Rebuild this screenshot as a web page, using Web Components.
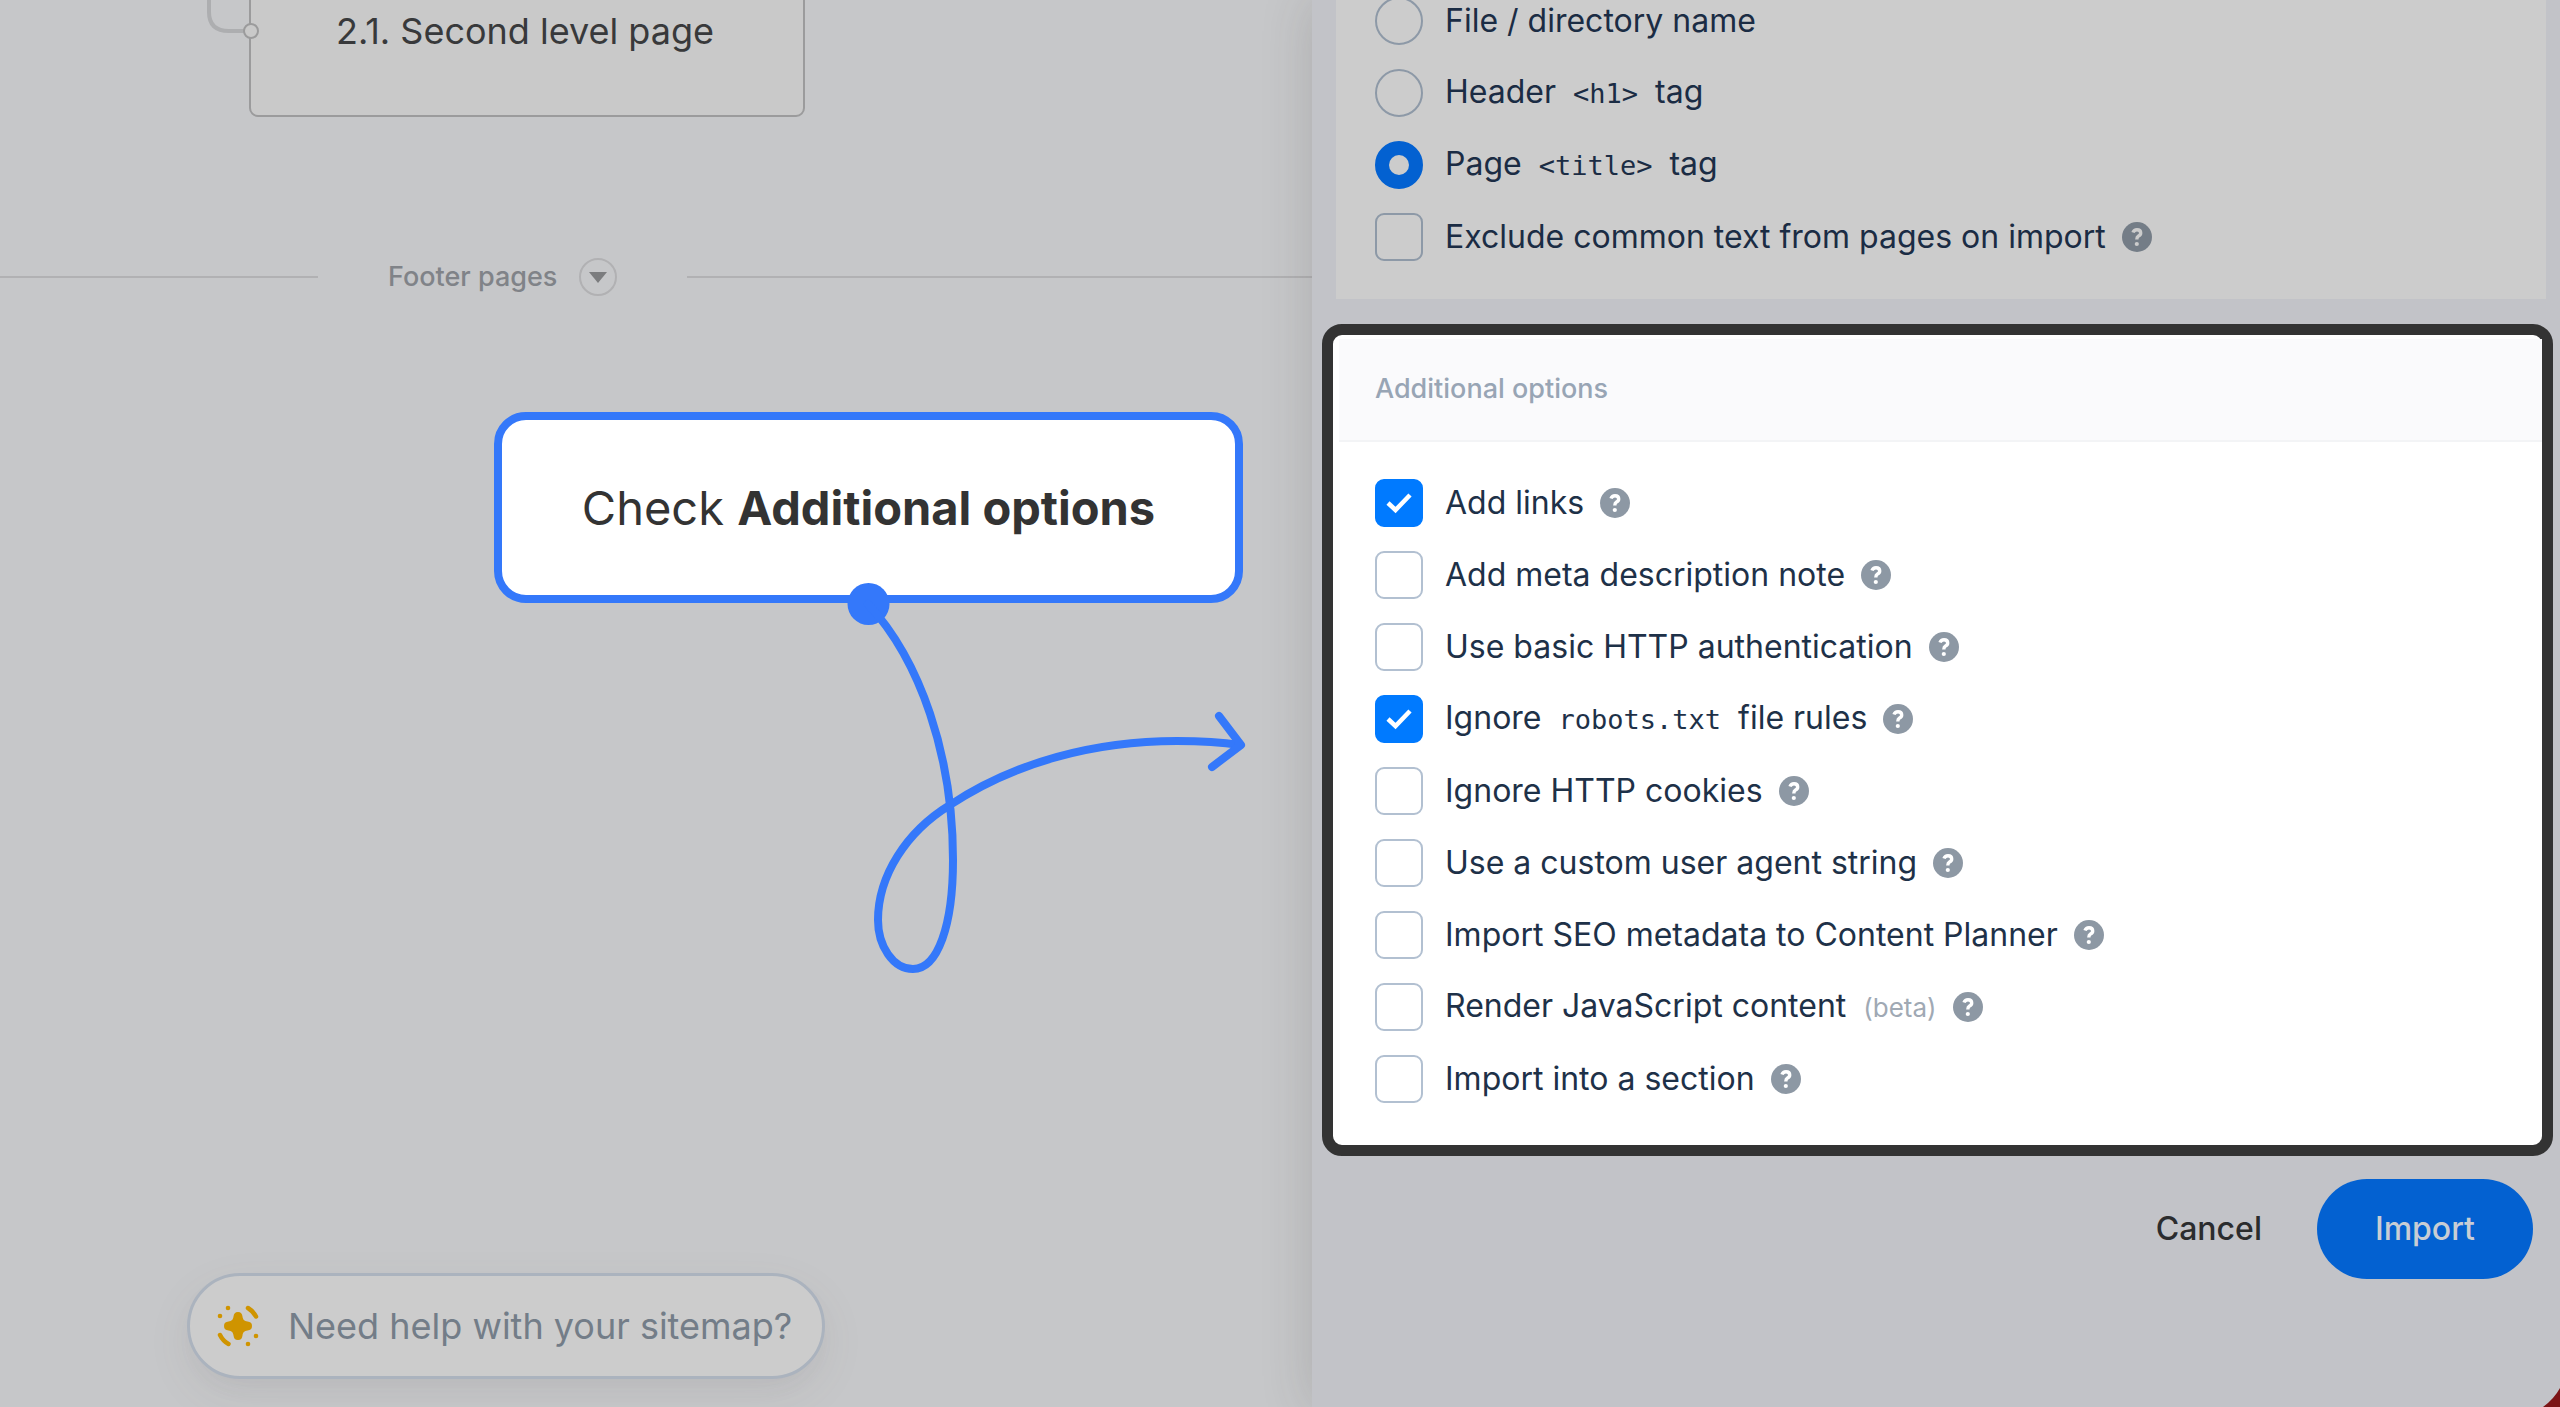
<!DOCTYPE html>
<html lang="en">
<head>
  <meta charset="utf-8">
  <title>Import sitemap</title>
  <style>
    body {
      margin: 0;
      background: #c6c7c9;
      font-family: Inter, "Liberation Sans", sans-serif;
    }
  </style>
</head>
<body>
  <app-shell>
    <site-canvas slot="canvas">
      <page-node>2.1. Second level page</page-node>
      <section-divider>Footer pages</section-divider>
      <help-pill>Need help with your sitemap?</help-pill>
      <tour-callout>Check <b>Additional options</b></tour-callout>
    </site-canvas>

    <import-panel slot="panel">
      <option-group>
        <option-row type="radio">File / directory name</option-row>
        <option-row type="radio">Header <code>&lt;h1&gt;</code> tag</option-row>
        <option-row type="radio" checked>Page <code>&lt;title&gt;</code> tag</option-row>
        <option-row help>Exclude common text from pages on import</option-row>
      </option-group>

      <option-group highlighted heading="Additional options">
        <option-row checked help>Add links</option-row>
        <option-row help>Add meta description note</option-row>
        <option-row help>Use basic HTTP authentication</option-row>
        <option-row checked help>Ignore <code>robots.txt</code> file rules</option-row>
        <option-row help>Ignore HTTP cookies</option-row>
        <option-row help>Use a custom user agent string</option-row>
        <option-row help>Import SEO metadata to Content Planner</option-row>
        <option-row help>Render JavaScript content <small>(beta)</small></option-row>
        <option-row help>Import into a section</option-row>
      </option-group>
    </import-panel>
  </app-shell>

  <script>
    class AppShell extends HTMLElement {
      constructor() {
        super();
        this.attachShadow({ mode: 'open' });
      }

      connectedCallback() {
        this.shadowRoot.innerHTML = `
          <style>
            :host {
              display: grid;
              grid-template-columns: 41fr 39fr;
              min-height: 100vh;
              overflow: hidden;
            }
          </style>
          <slot name="canvas"></slot>
          <slot name="panel"></slot>
        `;
      }
    }

    class SiteCanvas extends HTMLElement {
      constructor() {
        super();
        this.attachShadow({ mode: 'open' });
      }

      connectedCallback() {
        this.shadowRoot.innerHTML = `
          <style>
            :host {
              display: block;
              position: relative;
              padding-top: 257px;
            }
          </style>
          <slot></slot>
        `;
      }
    }

    class PageNode extends HTMLElement {
      constructor() {
        super();
        this.attachShadow({ mode: 'open' });
      }

      connectedCallback() {
        this.shadowRoot.innerHTML = `
          <style>
            :host {
              position: absolute;
              left: 249px;
              top: -56px;
              box-sizing: border-box;
              width: 556px;
              height: 173px;
              padding-right: 4px;
              display: flex;
              align-items: center;
              justify-content: center;
              border: 2px solid #9b9b9c;
              border-radius: 9px;
              background: #c9c9c9;
              color: #38393b;
              font-size: 36px;
              line-height: 44px;
            }
            .link {
              position: absolute;
              left: -50px;
              top: 50px;
            }
          </style>
          <svg class="link" width="60" height="50" viewBox="0 0 60 50" fill="none">
            <path d="M8 0V16Q8 35 28 35H44" stroke="#adaeb0" stroke-width="4"/>
            <circle cx="50" cy="35" r="7" fill="#c9c9c9" stroke="#9b9b9c" stroke-width="2"/>
          </svg>
          <span><slot></slot></span>
        `;
      }
    }

    class SectionDivider extends HTMLElement {
      constructor() {
        super();
        this.attachShadow({ mode: 'open' });
      }

      connectedCallback() {
        this.shadowRoot.innerHTML = `
          <style>
            :host {
              display: flex;
              align-items: center;
              color: #808388;
              font-size: 27px;
              font-weight: 500;
              line-height: 40px;
            }
            :host::before,
            :host::after {
              content: "";
              height: 2px;
              background: #b1b1b3;
            }
            :host::before {
              flex: 0 0 318px;
            }
            :host::after {
              flex: 1;
            }
            .title {
              display: flex;
              align-items: center;
              gap: 22px;
              padding: 0 70px;
            }
            button {
              box-sizing: border-box;
              width: 38px;
              height: 38px;
              padding: 0;
              display: grid;
              place-items: center;
              border: 2px solid #b1b1b3;
              border-radius: 50%;
              background: none;
            }
          </style>
          <div class="title">
            <slot></slot>
            <button type="button" aria-label="Toggle section">
              <svg width="18" height="11" viewBox="0 0 18 11"><path d="M0 0H18L9 11Z" fill="#7b7c7e"/></svg>
            </button>
          </div>
        `;
      }
    }

    class HelpPill extends HTMLElement {
      constructor() {
        super();
        this.attachShadow({ mode: 'open' });
      }

      connectedCallback() {
        this.shadowRoot.innerHTML = `
          <style>
            :host {
              position: absolute;
              left: 187px;
              bottom: 28px;
            }
            button {
              box-sizing: border-box;
              height: 106px;
              padding: 0 30px 0 27px;
              display: flex;
              align-items: center;
              gap: 29px;
              border: 3px solid #abb3be;
              border-radius: 53px;
              background: #ccc;
              box-shadow: 0 16px 48px rgba(110, 95, 80, 0.07), 0 12px 24px -8px rgba(90, 95, 120, 0.08);
              color: #737d88;
              font: 36px/44px Inter, "Liberation Sans", sans-serif;
              white-space: nowrap;
            }
          </style>
          <button type="button">
            <svg width="42" height="42" viewBox="0 0 42 42" fill="#cf9400">
              <path d="M21 7C24 7 25 8.500 25.500 11.500C26 14.800 27.200 16 30.500 16.500C33.500 17 35 18 35 21C35 24 33.500 25 30.500 25.500C27.200 26 26 27.200 25.500 30.500C25 33.500 24 35 21 35C18 35 17 33.500 16.500 30.500C16 27.200 14.800 26 11.500 25.500C8.500 25 7 24 7 21C7 18 8.500 17 11.500 16.500C14.800 16 16 14.800 16.500 11.500C17 8.500 18 7 21 7Z"/>
              <path d="M31 3Q36 6 39 11.500M3 30Q6 36 11.500 39" fill="none" stroke="#cf9400" stroke-width="4.500" stroke-linecap="round"/>
              <circle cx="11" cy="3" r="2.300"/><circle cx="3" cy="11" r="2.300"/>
              <circle cx="39" cy="31" r="2.300"/><circle cx="31" cy="39" r="2.300"/>
            </svg>
            <slot></slot>
          </button>
        `;
      }
    }

    class TourCallout extends HTMLElement {
      constructor() {
        super();
        this.attachShadow({ mode: 'open' });
      }

      connectedCallback() {
        this.shadowRoot.innerHTML = `
          <style>
            :host {
              position: absolute;
              left: 494px;
              top: 412px;
              z-index: 2;
              box-sizing: border-box;
              width: 749px;
              height: 191px;
              display: flex;
              align-items: center;
              justify-content: center;
              border: 8px solid #3478fa;
              border-radius: 32px;
              background: #fff;
              color: #333;
              font-size: 47px;
              line-height: 56px;
              white-space: pre;
            }
            ::slotted(b) {
              font-weight: 700;
            }
            svg {
              position: absolute;
              left: 338px;
              top: 160px;
            }
          </style>
          <span><slot></slot></span>
          <svg width="410" height="400" viewBox="840 580 410 400" fill="none" stroke="#3478fa" stroke-width="8" stroke-linecap="round" stroke-linejoin="round">
            <circle cx="868.500" cy="604" r="21" fill="#3478fa" stroke="none"/>
            <path d="M868 604C920 660 953 755 953 860C953 925 938 969 913 969C893 969 878 946 878 920C878 876 906 832 950 805C1015 762 1095 741 1177 741C1200 741 1220 742 1240 745"/>
            <path d="M1219 716L1241 745L1212 767"/>
          </svg>
        `;
      }
    }

    class ImportPanel extends HTMLElement {
      constructor() {
        super();
        this.attachShadow({ mode: 'open' });
      }

      connectedCallback() {
        this.shadowRoot.innerHTML = `
          <style>
            :host {
              display: block;
              position: relative;
              background: #c2c3c8;
              box-shadow: 0 0 48px rgba(60, 55, 50, 0.18);
            }
            /* the options are scrolled a little past the first row */
            .options {
              margin-top: -15px;
            }
            footer {
              display: flex;
              align-items: center;
              justify-content: flex-end;
              gap: 55px;
              padding: 23px 27px 0 0;
            }
            button {
              height: 100px;
              padding: 0;
              border: 0;
              background: none;
              color: #2b2c2e;
              font: 500 32px/40px Inter, "Liberation Sans", sans-serif;
            }
            .primary {
              padding: 0 58px;
              border-radius: 50px;
              background: #0361d1;
              color: #c8cdd4;
            }
            .corner {
              position: absolute;
              right: 0;
              bottom: 0;
            }
          </style>
          <div class="options"><slot></slot></div>
          <footer>
            <button type="button">Cancel</button>
            <button type="button" class="primary">Import</button>
          </footer>
          <svg class="corner" width="17" height="19" viewBox="0 0 17 19"><path d="M17 0Q11 11 0 19H17Z" fill="#7c1416"/></svg>
        `;
      }
    }

    class OptionGroup extends HTMLElement {
      constructor() {
        super();
        this.attachShadow({ mode: 'open' });
      }

      connectedCallback() {
        const heading = this.getAttribute('heading');
        this.shadowRoot.innerHTML = `
          <style>
            :host {
              display: block;
              margin: 0 14px 25px 24px;
              background: #ccc;
              color: #1b2c44;
              --control-border: #8d99a7;
              --control-fill: #0361d1;
              --control-mark: #ccc;
              --help: #747d87;
            }
            :host([highlighted]) {
              margin: 0 7px 0 10px;
              padding: 4px 0 0 6px;
              border: 11px solid #333;
              border-radius: 20px;
              background: #fff;
              color: #1e3148;
              --control-border: #b2c0d1;
              --control-fill: #007aff;
              --control-mark: #fff;
              --help: #8d98a4;
            }
            h2 {
              margin: 0;
              padding: 31px 36px 32px;
              border-bottom: 2px solid #f3f4f6;
              background: #fafafc;
              color: #98a5b5;
              font-size: 27px;
              font-weight: 500;
              line-height: 38px;
            }
            .rows {
              padding: 0 39px 26px;
            }
            :host([highlighted]) .rows {
              padding: 25px 36px 30px;
            }
          </style>
          ${heading ? `<h2>${heading}</h2>` : ''}
          <div class="rows"><slot></slot></div>
        `;
      }
    }

    class OptionRow extends HTMLElement {
      constructor() {
        super();
        this.attachShadow({ mode: 'open' });
      }

      connectedCallback() {
        const type = this.getAttribute('type') || 'checkbox';
        const checked = this.hasAttribute('checked') ? 'checked' : '';
        this.shadowRoot.innerHTML = `
          <style>
            :host {
              display: flex;
              align-items: center;
              gap: 16px;
              height: 72px;
              font-size: 32px;
              line-height: 40px;
            }
            label {
              display: flex;
              align-items: center;
              gap: 22px;
            }
            .control {
              display: grid;
              place-items: center;
            }
            .control > * {
              grid-area: 1 / 1;
            }
            input {
              appearance: none;
              box-sizing: border-box;
              width: 48px;
              height: 48px;
              margin: 0;
              border: 2px solid var(--control-border);
              border-radius: 9px;
            }
            input[type="radio"] {
              border-radius: 50%;
            }
            input:checked {
              border-color: var(--control-fill);
              background: var(--control-fill);
            }
            .mark {
              display: none;
              pointer-events: none;
            }
            input:checked + .mark {
              display: block;
            }
            ::slotted(code) {
              padding: 0 8px;
              font-family: "DejaVu Sans Mono", monospace;
              font-size: 27px;
            }
            ::slotted(small) {
              padding-left: 8px;
              color: #a0a9b4;
              font-size: 26px;
            }
            button {
              width: 30px;
              height: 30px;
              padding: 0;
              border: 0;
              border-radius: 50%;
              background: var(--help);
            }
            button svg {
              display: block;
            }
          </style>
          <label>
            <span class="control">
              <input type="${type}" ${checked}>
              ${type === 'radio'
                ? '<svg class="mark" width="20" height="20"><circle cx="10" cy="10" r="10" fill="var(--control-mark)"/></svg>'
                : '<svg class="mark" width="28" height="22" viewBox="0 0 28 22" fill="none"><path d="M3 11L10.500 18L25 3" stroke="var(--control-mark)" stroke-width="4.500"/></svg>'}
            </span>
            <span><slot></slot></span>
          </label>
          ${this.hasAttribute('help') ? `
            <button type="button" aria-label="Help">
              <svg width="30" height="30" viewBox="0 0 30 30" fill="none">
                <path d="M11 10.500Q12 7.700 15 7.700Q18.700 7.700 18.700 11Q18.700 13 16.500 14Q14.800 15 14.800 17.500" stroke="var(--control-mark)" stroke-width="3.400"/>
                <circle cx="14.800" cy="22" r="2.100" fill="var(--control-mark)"/>
              </svg>
            </button>` : ''}
        `;
      }
    }

    customElements.define('app-shell', AppShell);
    customElements.define('site-canvas', SiteCanvas);
    customElements.define('page-node', PageNode);
    customElements.define('section-divider', SectionDivider);
    customElements.define('help-pill', HelpPill);
    customElements.define('tour-callout', TourCallout);
    customElements.define('import-panel', ImportPanel);
    customElements.define('option-group', OptionGroup);
    customElements.define('option-row', OptionRow);
  </script>
</body>
</html>
